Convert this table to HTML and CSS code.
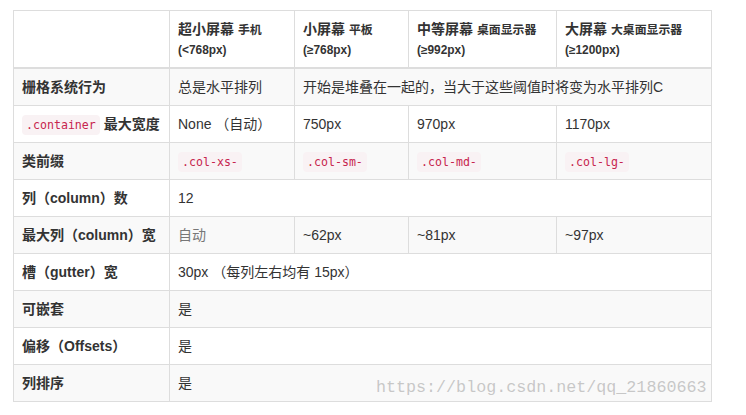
FILE: index.html
```html
<!DOCTYPE html>
<html lang="zh">
<head>
<meta charset="utf-8">
<link rel="stylesheet" href="styles.css">
</head>
<body>
<div class="page">
<table class="grid">
<colgroup>
<col class="c1"><col class="c2"><col class="c3"><col class="c4"><col class="c5">
</colgroup>
<thead>
<tr>
<th></th>
<th>超小屏幕 <small>手机</small><br><small>(&lt;768px)</small></th>
<th>小屏幕 <small>平板</small><br><small>(≥768px)</small></th>
<th>中等屏幕 <small>桌面显示器</small><br><small>(≥992px)</small></th>
<th>大屏幕 <small>大桌面显示器</small><br><small>(≥1200px)</small></th>
</tr>
</thead>
<tbody>
<tr><th>栅格系统行为</th><td>总是水平排列</td><td colspan="3">开始是堆叠在一起的，当大于这些阈值时将变为水平排列C</td></tr>
<tr><th><code>.container</code> 最大宽度</th><td>None （自动）</td><td>750px</td><td>970px</td><td>1170px</td></tr>
<tr><th>类前缀</th><td><code>.col-xs-</code></td><td><code>.col-sm-</code></td><td><code>.col-md-</code></td><td><code>.col-lg-</code></td></tr>
<tr><th>列（column）数</th><td colspan="4">12</td></tr>
<tr><th>最大列（column）宽</th><td class="muted">自动</td><td>~62px</td><td>~81px</td><td>~97px</td></tr>
<tr><th>槽（gutter）宽</th><td colspan="4">30px （每列左右均有 15px）</td></tr>
<tr><th>可嵌套</th><td colspan="4">是</td></tr>
<tr><th>偏移（Offsets）</th><td colspan="4">是</td></tr>
<tr><th>列排序</th><td colspan="4">是</td></tr>
</tbody>
</table>
<div class="watermark">https://blog.csdn.net/qq_21860663</div>
</div>
</body>
</html>
```
FILE: styles.css
```css
html, body {
  margin: 0;
  padding: 0;
  background: #fff;
}
body {
  font-family: "Liberation Sans", "Noto Sans CJK SC", sans-serif;
  font-size: 14px;
  line-height: 20px;
  color: #333;
}
.page {
  position: relative;
  padding: 10px 0 0 13px;
}
.grid {
  border-collapse: collapse;
  border-spacing: 0;
  table-layout: fixed;
  width: 698px;
  border: 1px solid #ddd;
}
.c1 { width: 156px; }
.c2 { width: 125px; }
.c3 { width: 114px; }
.c4 { width: 148px; }
.c5 { width: 155px; }
.grid th, .grid td {
  padding: 8px;
  border: 1px solid #ddd;
  text-align: left;
  vertical-align: top;
  line-height: 20px;
  white-space: nowrap;
}
.grid tbody th, .grid tbody td {
  height: 20px;
}
.grid th {
  font-weight: bold;
}
.grid thead th {
  border-bottom: 2px solid #ddd;
  vertical-align: bottom;
}
.grid small {
  font-size: 85%;
  line-height: 1;
}
.grid tbody tr:nth-child(odd) {
  background: #f9f9f9;
}
.muted {
  color: #777;
}
code {
  font-family: "DejaVu Sans Mono", monospace;
  font-size: 11.6px;
  line-height: 1;
  font-weight: normal;
  color: #c7254e;
  background: #f9f2f4;
  padding: 3px 4px;
  border-radius: 4px;
}
.watermark {
  position: absolute;
  left: 376px;
  top: 376px;
  font-family: "Liberation Mono", monospace;
  font-size: 16.7px;
  line-height: 24px;
  color: rgba(150, 150, 150, 0.5);
  white-space: nowrap;
}
```
